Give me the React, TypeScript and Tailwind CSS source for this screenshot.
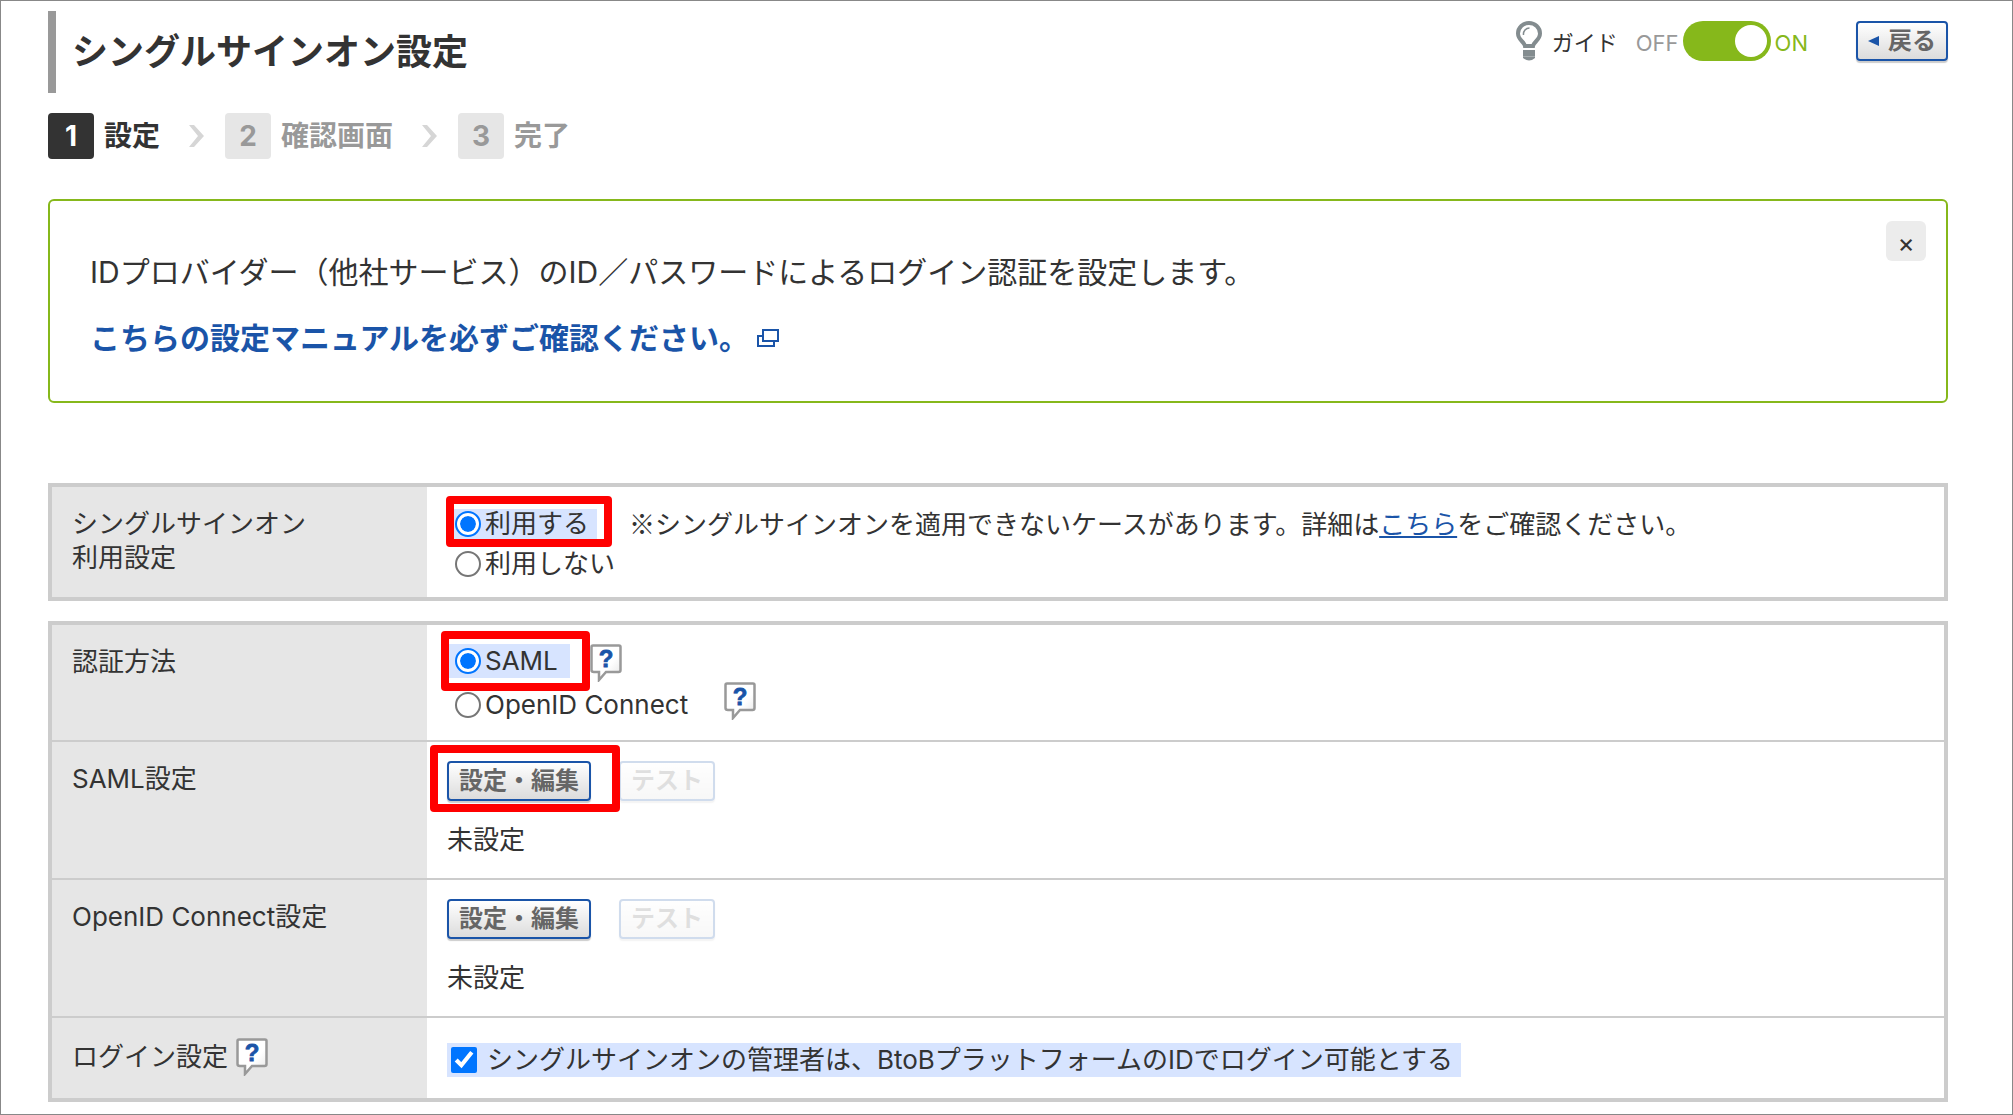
import React, { useState } from "react";

const STEPS = ["設定", "確認画面", "完了"];

const Chevron = () => (
  <svg width="16" height="24" viewBox="0 0 16 24" className="mr-[21px] ml-7 shrink-0" aria-hidden="true">
    <path d="M1 1 H6 L16 12 L6 23 H1 L10 12 Z" fill="#d6d6d6" />
  </svg>
);

const BulbIcon = () => (
  <svg width="26" height="40" viewBox="0 0 26 40" aria-hidden="true">
    <path
      d="M9 25 C8.500 21 2 19 2 12.500 C2 6.500 7 2 13 2 C19 2 24 6.500 24 12.500 C24 19 17.500 21 17 25 Z"
      fill="none"
      stroke="#838c8f"
      strokeWidth="4"
    />
    <path d="M7.500 14 C7 10 10 7 13.500 7" fill="none" stroke="#838c8f" strokeWidth="1.500" />
    <path d="M7 29 H19 V37 Q13 42 7 37 Z" fill="#838c8f" />
    <path d="M7 35.500 H19" stroke="#a5acae" strokeWidth="1" />
  </svg>
);

const WindowIcon = () => (
  <svg width="22" height="18" viewBox="0 0 22 18" fill="none" stroke="#1a54a8" strokeWidth="2" aria-hidden="true">
    <path d="M6 1 H21 V12 H6 Z" />
    <path d="M6 7 H1 V17 H17 V12" />
  </svg>
);

const HelpButton = ({ className = "" }: { className?: string }) => (
  <button type="button" aria-label="ヘルプ" className={`shrink-0 cursor-pointer ${className}`}>
    <svg width="32" height="38" viewBox="0 0 32 38" className="block">
      <defs>
        <linearGradient id="bubble" x1="0" y1="0" x2="1" y2="1">
          <stop offset="0.6" stopColor="#fff" />
          <stop offset="1" stopColor="#e4e4e4" />
        </linearGradient>
      </defs>
      <path
        d="M3 1.500 H29 Q30.500 1.500 30.500 3 V26 Q30.500 28 28.500 28 H16 L9 36 V28 H4 Q1.500 28 1.500 26 V3 Q1.500 1.500 3 1.500 Z"
        fill="url(#bubble)"
        stroke="#999"
        strokeWidth="2.500"
      />
      <text
        x="16"
        y="23"
        textAnchor="middle"
        fontFamily="Liberation Sans, sans-serif"
        fontWeight="700"
        fontSize="24"
        fill="#1a54a8"
        stroke="#1a54a8"
        strokeWidth="0.8"
      >
        ?
      </text>
    </svg>
  </button>
);

const Highlight = ({ className }: { className: string }) => (
  <span className={`pointer-events-none absolute z-10 rounded-sm border-8 border-[#ff0000] ${className}`} />
);

const PushButton = ({ children, disabled = false }: { children: React.ReactNode; disabled?: boolean }) => (
  <button
    type="button"
    disabled={disabled}
    className="flex h-10 cursor-pointer items-center rounded-sm border-2 border-[#1a54a8] bg-linear-to-b from-white to-[#dcdcdc] px-2.5 text-2xl leading-none font-bold text-[#666] shadow-[0_2px_1px_#ccc] disabled:cursor-default disabled:opacity-20"
  >
    {children}
  </button>
);

const Radio = (props: React.InputHTMLAttributes<HTMLInputElement>) => (
  <input
    type="radio"
    className="mr-1 ml-2 size-[26px] shrink-0 appearance-none rounded-full border-2 border-[#767676] bg-white checked:border-[#0075ff] checked:bg-[#0075ff] checked:bg-clip-content checked:p-[3px] checked:shadow-[inset_0_0_0_3px_white]"
    {...props}
  />
);

const Row = ({ label, children, last = false }: { label: React.ReactNode; children: React.ReactNode; last?: boolean }) => (
  <tr className={last ? "" : "border-b-2 border-[#ccc]"}>
    <th scope="row" className="w-[377px] bg-[#e6e6e6] px-5 pt-5 pb-4 text-left align-top font-normal">
      {label}
    </th>
    <td className="px-5 pt-[19px] pb-4 align-top">{children}</td>
  </tr>
);

const App = () => {
  const [guide, setGuide] = useState(true);
  const [showInfo, setShowInfo] = useState(true);
  const [use, setUse] = useState("on");
  const [method, setMethod] = useState("saml");
  const [adminLogin, setAdminLogin] = useState(true);

  return (
    <div className="min-h-screen border border-[#888] bg-white pr-16 pl-[47px] font-['Inter','Noto_Sans_CJK_JP',sans-serif] text-[26px] leading-[34px] text-[#333]">
      <header className="flex items-start justify-between pt-2.5">
        <h1 className="border-l-8 border-[#999] pl-4 text-4xl leading-[82px] font-bold">
          シングルサインオン設定
        </h1>
        <div className="flex items-center pt-2.5 text-[22px]">
          <BulbIcon />
          <span className="ml-2.5 pt-1">ガイド</span>
          <label className="ml-[18px] flex items-center gap-1">
            <span className="pt-1 text-[#999]">OFF</span>
            <input
              type="checkbox"
              role="switch"
              aria-label="ガイド"
              checked={guide}
              onChange={(e) => setGuide(e.target.checked)}
              className="flex h-10 w-[88px] cursor-pointer appearance-none rounded-full bg-[#ccc] p-1 before:size-8 before:rounded-full before:bg-white checked:justify-end checked:bg-[#86b81b]"
            />
            <span className="pt-1 text-[#86b81b]">ON</span>
          </label>
          <div className="ml-12">
            <PushButton>
              <svg width="12" height="12" viewBox="0 0 12 12" className="mr-2" aria-hidden="true">
                <path d="M0 6 L11 1 V11 Z" fill="#1a54a8" />
              </svg>
              戻る
            </PushButton>
          </div>
        </div>
      </header>

      <ol className="mt-5 flex items-center text-[28px] leading-[46px] font-bold">
        {STEPS.map((step, i) => (
          <li key={step} className={i === 0 ? "flex items-center" : "flex items-center text-[#999]"}>
            {i > 0 && <Chevron />}
            <span
              className={
                i === 0
                  ? "mr-2.5 size-[46px] rounded bg-[#333] text-center text-white"
                  : "mr-2.5 size-[46px] rounded bg-[#e6e6e6] text-center"
              }
            >
              {i + 1}
            </span>
            {step}
          </li>
        ))}
      </ol>

      {showInfo && (
        <section className="mt-10 flex items-start justify-between rounded-md border-2 border-[#86b81b] pt-5 pr-5 pb-[41px] pl-10 text-[30px]">
          <div className="pt-[29px]">
            <p className="leading-[44px]">
              IDプロバイダー（他社サービス）のID／パスワードによるログイン認証を設定します。
            </p>
            <a href="#manual" className="mt-[22px] flex items-center gap-2 leading-[44px] font-bold text-[#1a54a8]">
              こちらの設定マニュアルを必ずご確認ください。
              <WindowIcon />
            </a>
          </div>
          <button
            type="button"
            aria-label="閉じる"
            onClick={() => setShowInfo(false)}
            className="size-10 cursor-pointer rounded-md bg-[#ececec] pt-1 text-[26px]"
          >
            ×
          </button>
        </section>
      )}

      <table className="mt-20 w-full border-collapse border-4 border-[#ccc]">
        <tbody>
          <Row
            last
            label={
              <>
                シングルサインオン
                <br />
                利用設定
              </>
            }
          >
            <div className="flex items-center">
              <label className="relative flex items-center bg-[#d7e4ff] pr-2 leading-[30px]">
                <Radio name="use" checked={use === "on"} onChange={() => setUse("on")} />
                利用する
                <Highlight className="-top-[13px] -right-[15px] -bottom-2 -left-px" />
              </label>
              <p className="ml-8">
                <span className="font-['Noto_Sans_CJK_JP',sans-serif]">※</span>
                シングルサインオンを適用できないケースがあります。詳細は
                <a href="#detail" className="text-[#1a54a8] underline">
                  こちら
                </a>
                をご確認ください。
              </p>
            </div>
            <label className="mt-[5px] flex items-center">
              <Radio name="use" checked={use === "off"} onChange={() => setUse("off")} />
              利用しない
            </label>
          </Row>
        </tbody>
      </table>

      <table className="mt-5 w-full border-collapse border-4 border-[#ccc]">
        <tbody>
          <Row label="認証方法">
            <div className="flex items-start">
              <label className="relative flex items-center bg-[#d7e4ff] pr-3">
                <Radio name="method" checked={method === "saml"} onChange={() => setMethod("saml")} />
                SAML
                <Highlight className="-top-[13px] -right-5 -bottom-[13px] -left-1.5" />
              </label>
              <HelpButton className="ml-5" />
            </div>
            <div className="mb-0.5 flex items-start">
              <label className="flex items-center pt-1.5">
                <Radio name="method" checked={method === "oidc"} onChange={() => setMethod("oidc")} />
                OpenID Connect
              </label>
              <HelpButton className="ml-9" />
            </div>
          </Row>
          <Row label="SAML設定">
            <div className="flex gap-7">
              <div className="relative">
                <PushButton>設定・編集</PushButton>
                <Highlight className="-top-4 -right-[29px] -bottom-[11px] -left-[17px]" />
              </div>
              <PushButton disabled>テスト</PushButton>
            </div>
            <p className="mt-[22px] mb-[5px]">未設定</p>
          </Row>
          <Row label="OpenID Connect設定">
            <div className="flex gap-7">
              <PushButton>設定・編集</PushButton>
              <PushButton disabled>テスト</PushButton>
            </div>
            <p className="mt-[22px] mb-[5px]">未設定</p>
          </Row>
          <Row
            last
            label={
              <span className="flex items-center gap-2">
                ログイン設定
                <HelpButton />
              </span>
            }
          >
            <label className="mt-1.5 mb-[5px] flex w-fit items-center bg-[#d7e4ff] pr-2">
              <input
                type="checkbox"
                checked={adminLogin}
                onChange={(e) => setAdminLogin(e.target.checked)}
                className="mr-2.5 ml-1 size-[26px] accent-[#0075ff]"
              />
              シングルサインオンの管理者は、BtoBプラットフォームのIDでログイン可能とする
            </label>
          </Row>
        </tbody>
      </table>
    </div>
  );
};

export default App;
